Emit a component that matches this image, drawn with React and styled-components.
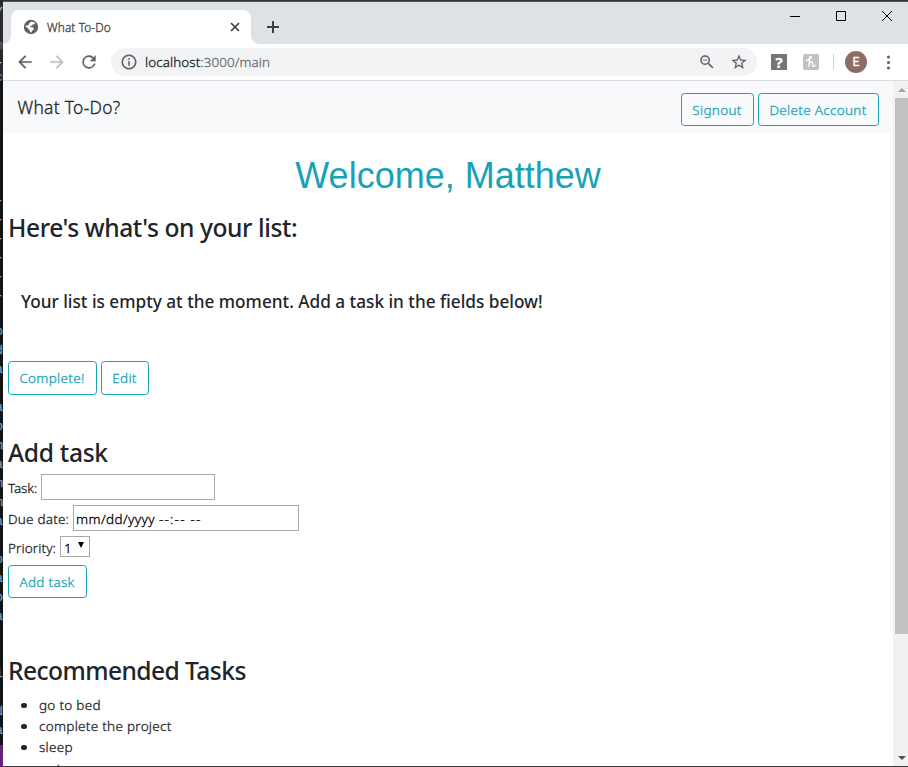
import React from 'react';
import styled, { createGlobalStyle } from 'styled-components';

const Global = createGlobalStyle`
  * { box-sizing: border-box; }
  html, body { margin: 0; height: 767px; overflow: hidden; background: #131415; }
  body { font-family: "Noto Sans", "Open Sans", sans-serif; font-weight: 300; -webkit-text-stroke-width: 0.3px; color: #212529; }
`;
const Desktop = styled.div`
  width: 908px; height: 767px; display: flex; overflow: hidden; background: #131415; position: relative;
`;
const EditorStrip = styled.div`
  width: 3px; height: 767px; flex: none; overflow: hidden; position: relative;
  background: linear-gradient(#2b2b2d 0 80px, #131415 80px 745px, #68217a 745px);
`;
const Glyph = styled.span`
  position: absolute; right: 0; top: ${p => p.$y}px; line-height: 16px;
  font: 13px/16px "Liberation Mono", monospace; color: ${p => p.$c};
`;
const Browser = styled.div`
  width: 905px; height: 767px; display: flex; flex-direction: column; background: #fff;
  border-top: 1px solid #333438; border-bottom: 1px solid #3b3b3d;
`;
const TitleBar = styled.div`
  height: 43px; flex: none; background: #dee1e6; border-top: 1px solid #22608f; display: flex; align-items: flex-end;
`;
const Tab = styled.div`
  width: 240px; height: 34px; margin-left: 8px; padding: 0 10px 0 12px; background: #fff;
  border-radius: 8px 8px 0 0; display: flex; align-items: center; gap: 8px;
  position: relative;
  &::before, &::after {
    content: ""; position: absolute; bottom: 0; width: 8px; height: 8px;
  }
  &::before { left: -8px; background: radial-gradient(circle at 0 0, transparent 7.5px, #fff 8px); }
  &::after { right: -8px; background: radial-gradient(circle at 100% 0, transparent 7.5px, #fff 8px); }
`;
const TabTitle = styled.span`
  flex: 1; font-size: 11.8px; letter-spacing: 0.12px; color: #3c4043; white-space: nowrap; padding-bottom: 1px;
`;
const NewTab = styled.div`
  width: 28px; height: 34px; margin-left: 8px; display: flex; align-items: center; justify-content: center;
`;
const WindowControls = styled.div`
  margin-left: auto; align-self: flex-start; display: flex; margin-right: -2px;
`;
const WindowButton = styled.div`
  width: 46px; height: 28px; display: flex; align-items: center; justify-content: center;
`;
const Toolbar = styled.div`
  height: 37px; flex: none; display: flex; align-items: center; background: #fff;
  border-bottom: 1px solid #dadce0; padding-left: 12px;
`;
const NavIcons = styled.div`
  display: flex; gap: 12px; width: 96px;
`;
const Omnibox = styled.div`
  width: 646px; height: 28px; border-radius: 14px; background: #f1f3f4; padding: 0 9px;
  display: flex; align-items: center;
`;
const Url = styled.span`
  margin-left: 7px; flex: 1; font-size: 13.4px; letter-spacing: 0.1px; color: #202124; white-space: nowrap;
  span { color: #6b6f73; }
`;
const StarSlot = styled.span`
  display: flex; margin-left: 14px;
`;
const Actions = styled.div`
  display: flex; align-items: center; margin-left: 14px;
`;
const Extension = styled.span`
  width: 16px; height: 16px; display: flex; align-items: center; justify-content: center; margin-right: 16px;
  background: ${p => p.$bg}; border-radius: ${p => p.$r}px; color: #fff; font: bold 15px/16px "Noto Sans", sans-serif;
`;
const Divider = styled.span`
  width: 1px; height: 16px; background: #cfd1d4; margin: 0 11px 0 -2px;
`;
const Avatar = styled.span`
  width: 22px; height: 22px; border-radius: 50%; background: #8d6e63; color: #fff;
  font: 12px/22px "Roboto", sans-serif; text-align: center; margin-right: 11px;
`;
const Viewport = styled.div`
  flex: 1; min-height: 0; display: flex;
`;
const Page = styled.main`
  width: 890px; height: 685px; overflow: hidden; background: #fff;
`;
const Navbar = styled.nav`
  height: 52px; background: #f8f9fa; display: flex; align-items: center; padding: 5px 14px 0 15px; gap: 4px;
`;
const Brand = styled.span`
  flex: 1; font-size: 17.4px; line-height: 24px; margin-top: -5px; letter-spacing: 0.3px; margin-left: -0.5px;
`;
const Button = styled.button`
  width: ${p => p.$w}px; height: ${p => p.$h || 33}px; padding: ${p => (p.$h ? '0 1px 1px 0' : '1px 1px 0 0')};
  border: 1px solid #17a2b8; border-radius: 3.5px; background: transparent; color: #17a2b8;
  font: 300 13.5px/20px "Noto Sans", sans-serif; letter-spacing: 0.3px; white-space: nowrap;
  -webkit-text-stroke-width: 0.3px;
`;
const Welcome = styled.h1`
  margin: 21px 0 0; font: 400 36px/44px "Liberation Sans", Arial, sans-serif; text-align: center; color: #17a2b8;
  -webkit-text-stroke-width: 0;
`;
const Body = styled.div`
  padding-left: 5px;
`;
const Heading = styled.h2`
  margin: ${p => p.$mt}px 0 0; font-size: 24.6px; line-height: 30px; font-weight: 500; letter-spacing: ${p => p.$ls}px;
  -webkit-text-stroke-width: 0;
`;
const EmptyNote = styled.h4`
  margin: 47px 0 0 13px; font-size: 17.2px; line-height: 24px; font-weight: 500; letter-spacing: 0px;
  -webkit-text-stroke-width: 0;
`;
const ButtonRow = styled.div`
  display: flex; gap: 4px; margin-top: ${p => p.$mt}px;
`;
const Field = styled.label`
  display: flex; align-items: center; height: ${p => p.$h}px; margin-top: ${p => p.$mt}px;
  font-size: 13.5px; letter-spacing: ${p => p.$ls}px; white-space: nowrap;
`;
const FieldName = styled.span`
  width: ${p => p.$w}px; padding-top: 2px;
`;
const Input = styled.span`
  width: ${p => p.$w}px; height: ${p => p.$h}px; border: 1px solid #a9a9a9; background: #fff; color: #000;
  display: flex; align-items: center; padding: 1px 2px 0; letter-spacing: 0.4px;
`;
const TimePart = styled.span`
  margin-left: 4px; letter-spacing: 1.2px;
`;
const Digit = styled.span`
  margin: 1px 0 0 1px;
`;
const Arrow = styled.span`
  margin: -4px 3px 0 auto; border: 3.5px solid transparent; border-top: 6px solid #000; border-bottom: 0;
`;
const List = styled.ul`
  list-style: none; margin: 9px 0 0; padding: 0 0 0 14px; font-size: 13.5px; line-height: 21px;
`;
const Item = styled.li`
  display: flex; align-items: center; gap: 12.5px; letter-spacing: 0.28px;
  &::before { content: ""; width: 5.5px; height: 5.5px; border-radius: 50%; background: #212529; margin-left: -1px; }
  &:last-child { padding-top: 2px; }
`;
const Scrollbar = styled.div`
  width: 15px; height: 685px; background: #f1f1f1; padding-left: 2px; display: flex; flex-direction: column; align-items: center;
`;
const ScrollArrow = styled.div`
  height: 17px; width: 13px; display: flex; align-items: center; justify-content: center;
`;
const Thumb = styled.div`
  width: 13px; height: 536px; background: #c1c1c1; margin-bottom: auto;
`;

const glyphs = [
  [5, '/', '#a5adb0'], [38, 'n', '#666'], [55, '-', '#ccc'], [70, 'c', '#4a7ca8'],
  ...[193, 212, 231, 250, 269, 288].map(y => [y, '-', '#c5b18b']),
  ...[[324, 'o'], [343, 'd'], [362, 'a'], [400, 'a'], [419, 'o'], [438, 'm'], [457, 'a'], [476, 'm'], [495, 'm'], [514, 'a'],
    [552, 'o'], [571, 'a'], [590, 'o'], [609, 'a'], [666, 'i'], [704, 'd'], [723, 'a']].map(([y, c]) => [y, c, '#6a9ec0']),
];

const Globe = () => (
  <svg width="16" height="16" viewBox="0 0 16 16"><circle cx="8" cy="8" r="7.2" fill="#5f6368" />
    <path d="M8.800 2.600 11.600 3.400 12 4.300 10.800 5.500H9.500L8.600 6.700 7.200 7.300 7.400 8.300H9.500L10.800 9.600V10.600L9 11.800 8.400 13.500 7 13.300V12L5.800 10.600 5 9.200 2.600 7.500 2.700 6.500H4.800L6.300 5.100V4.100Z" fill="#fff" /></svg>
);
const Material = ({ d, size = 18, fill = '#5f6368' }) => (
  <svg width={size} height={size} viewBox="0 0 24 24" fill={fill} stroke={fill} strokeWidth="0.2"><path d={d} /></svg>
);

export default function App() {
  return (
    <Desktop>
      <Global />
      <EditorStrip>{glyphs.map(([y, c, color]) => <Glyph key={y} $y={y} $c={color}>{c}</Glyph>)}</EditorStrip>
      <Browser>
        <TitleBar>
          <Tab>
            <Globe />
            <TabTitle>What To-Do</TabTitle>
            <svg width="12" height="12" viewBox="0 0 12 12" stroke="#3c4043" strokeWidth="1.7"><path d="m2 2 8 8M10 2l-8 8" /></svg>
          </Tab>
          <NewTab><svg width="14" height="14" stroke="#3c4043" strokeWidth="2"><path d="M7 1v12M1 7h12" /></svg></NewTab>
          <WindowControls>
            <WindowButton><svg width="10" height="10" stroke="#000"><path d="M0 5.5h10" /></svg></WindowButton>
            <WindowButton><svg width="10" height="10" fill="none" stroke="#000"><path d="M.5.5h9v9h-9z" /></svg></WindowButton>
            <WindowButton><svg width="10" height="10" stroke="#000"><path d="m0 0 10 10M10 0 0 10" /></svg></WindowButton>
          </WindowControls>
        </TitleBar>
        <Toolbar>
          <NavIcons>
            <Material size={20} d="M20 11H7.83l5.59-5.59L12 4l-8 8 8 8 1.41-1.41L7.83 13H20v-2z" />
            <Material size={20} fill="#bdc1c6" d="m12 4-1.41 1.41L16.17 11H4v2h12.17l-5.58 5.59L12 20l8-8z" />
            <Material size={20} d="M17.65 6.35A7.958 7.958 0 0 0 12 4a8 8 0 1 0 7.73 10h-2.08A6 6 0 1 1 12 6c1.66 0 3.14.69 4.22 1.78L13 11h7V4l-2.35 2.35z" />
          </NavIcons>
          <Omnibox>
            <Material size={18} d="M11 17h2v-6h-2v6zm1-15a10 10 0 1 0 0 20 10 10 0 0 0 0-20zm0 18a8 8 0 1 1 0-16 8 8 0 0 1 0 16zM11 9h2V7h-2v2z" />
            <Url>localhost<span>:3000/main</span></Url>
            <Material size={18} d="M15.5 14h-.79l-.28-.27A6.47 6.47 0 0 0 16 9.5 6.5 6.5 0 1 0 9.5 16c1.61 0 3.09-.59 4.23-1.57l.27.28v.79l5 4.99L20.49 19l-4.99-5zm-6 0a4.5 4.5 0 1 1 0-9 4.5 4.5 0 0 1 0 9zM7 9h5v1H7z" />
            <StarSlot><Material size={18} d="m22 9.24-7.19-.62L12 2 9.19 8.63 2 9.24l5.46 4.73L5.82 21 12 17.27 18.18 21l-1.63-7.03L22 9.24zM12 15.4l-3.76 2.27 1-4.28-3.32-2.88 4.38-.38L12 6.1l1.71 4.04 4.38.38-3.32 2.88 1 4.28L12 15.4z" /></StarSlot>
          </Omnibox>
          <Actions>
            <Extension $bg="#757575" $r={0}>?</Extension>
            <Extension $bg="#c1c1c1" $r={2}>
              <svg width="12" height="14" viewBox="0 0 12 14" fill="none" stroke="#fff" strokeWidth="1.3" strokeLinecap="round"><path d="M1.500 5.500C3.500 5 6.300 3.600 6.300 2.200 6.300 1 4.500 1.200 4.300 3L4 11.500M4.200 8.500C5 6.500 7.800 6 7.600 8 7.500 9.500 6.800 11.500 8.300 11.500 9.300 11.500 9.800 10.800 10.200 10" /></svg>
            </Extension>
            <Divider />
            <Avatar>E</Avatar>
            <svg width="20" height="16" fill="#5f6368"><circle cx="10.5" cy="3" r="1.6" /><circle cx="10.5" cy="8.5" r="1.6" /><circle cx="10.5" cy="14" r="1.6" /></svg>
          </Actions>
        </Toolbar>
        <Viewport>
          <Page>
            <Navbar>
              <Brand>What To-Do?</Brand>
              <Button $w={73}>Signout</Button>
              <Button $w={121}>Delete Account</Button>
            </Navbar>
            <Welcome>Welcome, Matthew</Welcome>
            <Body>
              <Heading $mt={15} $ls={-0.43}>Here's what's on your list:</Heading>
              <EmptyNote>Your list is empty at the moment. Add a task in the fields below!</EmptyNote>
              <ButtonRow $mt={47}><Button $w={89} $h={34}>Complete!</Button><Button $w={48} $h={34}>Edit</Button></ButtonRow>
              <Heading $mt={43} $ls={-0.3}>Add task</Heading>
              <Field $h={26} $mt={6} $ls={-0.1}><FieldName $w={33}>Task:</FieldName><Input $w={174} $h={26} /></Field>
              <Field $h={26} $mt={5} $ls={0.2}>
                <FieldName $w={65}>Due date:</FieldName>
                <Input $w={226} $h={26}>mm/dd/yyyy<TimePart>--:-- --</TimePart></Input>
              </Field>
              <Field $h={21} $mt={5} $ls={0.1}><FieldName $w={52}>Priority:</FieldName><Input $w={30} $h={21}><Digit>1</Digit><Arrow /></Input></Field>
              <ButtonRow $mt={8}><Button $w={79}>Add task</Button></ButtonRow>
              <Heading $mt={58} $ls={-0.57}>Recommended Tasks</Heading>
              <List>
                <Item>go to bed</Item><Item>complete the project</Item><Item>sleep</Item><Item>wake up</Item>
              </List>
            </Body>
          </Page>
          <Scrollbar>
            <ScrollArrow><svg width="8" height="4" fill="#a3a3a3"><path d="M0 4h8L4 0z" /></svg></ScrollArrow>
            <Thumb />
            <ScrollArrow><svg width="8" height="4" fill="#505050"><path d="M0 0h8L4 4z" /></svg></ScrollArrow>
          </Scrollbar>
        </Viewport>
      </Browser>
    </Desktop>
  );
}
